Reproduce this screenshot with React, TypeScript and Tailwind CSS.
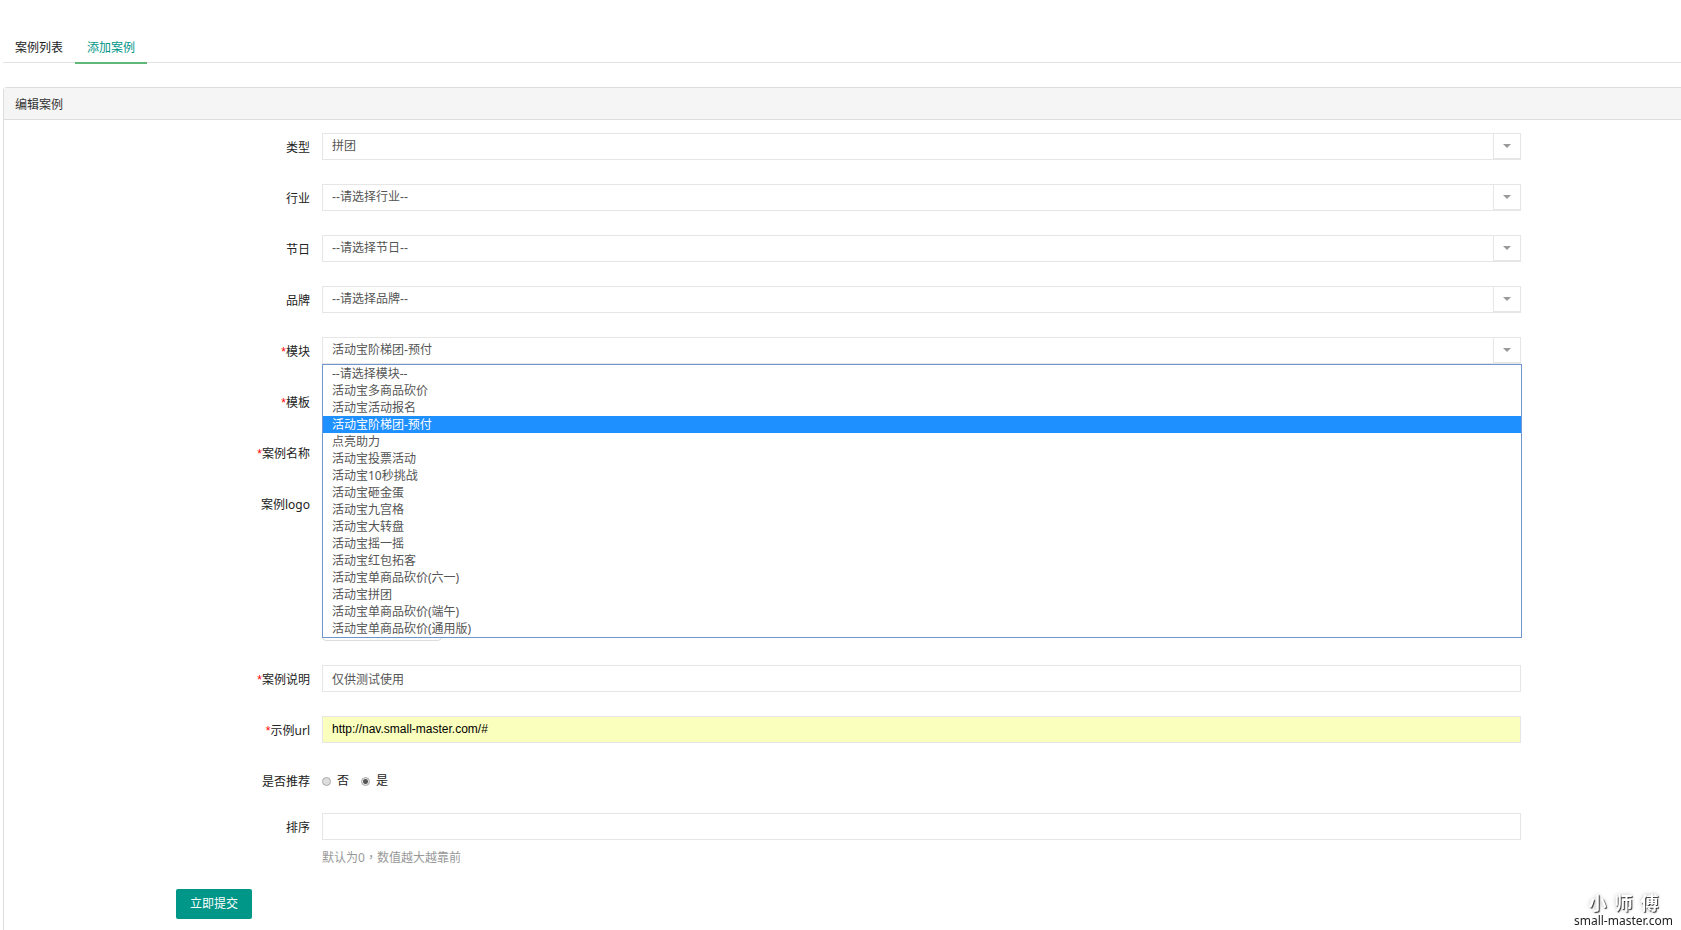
import { useState, type ReactNode } from "react";

const modules = [
  "--请选择模块--",
  "活动宝多商品砍价",
  "活动宝活动报名",
  "活动宝阶梯团-预付",
  "点亮助力",
  "活动宝投票活动",
  "活动宝10秒挑战",
  "活动宝砸金蛋",
  "活动宝九宫格",
  "活动宝大转盘",
  "活动宝摇一摇",
  "活动宝红包拓客",
  "活动宝单商品砍价(六一)",
  "活动宝拼团",
  "活动宝单商品砍价(端午)",
  "活动宝单商品砍价(通用版)",
];

const boxClass =
  "block h-[27px] w-full appearance-none rounded-none border border-[#e6e6e6] bg-white px-[9px] pb-px text-xs text-[#555] outline-none";
const arialClass = "font-['Liberation_Sans','Noto_Sans_CJK_SC',sans-serif]";

function Row({
  label,
  htmlFor,
  required,
  children,
}: {
  label: string;
  htmlFor: string;
  required?: boolean;
  children: ReactNode;
}) {
  return (
    <div className="flex gap-3">
      <label htmlFor={htmlFor} className="h-[22px] w-[306px] shrink-0 pt-[5px] text-right leading-5 text-[#222]">
        {required && <span className="font-['Liberation_Sans',sans-serif] text-[#ff0000]">*</span>}
        {label}
      </label>
      <div className="min-w-0 flex-1">{children}</div>
    </div>
  );
}

function SelectBox({
  id,
  options,
  value,
  onChange,
}: {
  id: string;
  options: string[];
  value?: string;
  onChange?: (value: string) => void;
}) {
  const [own, setOwn] = useState(options[0]);
  return (
    <div className="relative">
      <select
        id={id}
        value={value ?? own}
        onChange={(e) => (onChange ?? setOwn)(e.target.value)}
        className={`${boxClass} ${arialClass}`}
      >
        {options.map((o) => (
          <option key={o}>{o}</option>
        ))}
      </select>
      <span className="pointer-events-none absolute inset-y-0 right-0 flex w-7 items-center justify-center border-x border-t border-b-2 border-[#e6e6e6]">
        <svg width="8" height="4" viewBox="0 0 8 4" aria-hidden="true">
          <path d="M0 0h8L4 4z" fill="#999" />
        </svg>
      </span>
    </div>
  );
}

const radioClass =
  "size-[9px] appearance-none rounded-full border border-[#aaa] bg-[#dedede] checked:bg-[radial-gradient(circle,#555_0_2px,#e4e4e4_3px)]";

export default function App() {
  const [module, setModule] = useState(modules[3]);

  return (
    <div className="flex min-h-screen flex-col overflow-hidden bg-white pl-[3px] pt-8 font-['Noto_Sans','Noto_Sans_CJK_SC',sans-serif] text-xs text-[#333]">
      <nav className="flex h-[31px] border-b border-[#e2e2e2]">
        <a href="#list" className="h-8 px-3 leading-[31px] text-[#222]">
          案例列表
        </a>
        <a href="#add" className="h-8 border-b-2 border-[#5fb878] px-3 leading-[31px] text-[#009688]">
          添加案例
        </a>
      </nav>

      <section className="mt-6 flex flex-1 flex-col rounded-tl-sm border-l border-t border-[#ddd]">
        <h1 className="h-8 border-b border-[#ddd] bg-[#f5f5f5] pl-[11px] leading-[34px]">编辑案例</h1>

        <form onSubmit={(e) => e.preventDefault()} className="pt-[13px]">
          <div className="flex flex-col gap-6 pr-40">
            <Row label="类型" htmlFor="type">
              <SelectBox id="type" options={["拼团"]} />
            </Row>
            <Row label="行业" htmlFor="industry">
              <SelectBox id="industry" options={["--请选择行业--"]} />
            </Row>
            <Row label="节日" htmlFor="festival">
              <SelectBox id="festival" options={["--请选择节日--"]} />
            </Row>
            <Row label="品牌" htmlFor="brand">
              <SelectBox id="brand" options={["--请选择品牌--"]} />
            </Row>
            <Row label="模块" htmlFor="module" required>
              <div className="relative">
                <SelectBox id="module" options={modules} value={module} onChange={setModule} />
                <ul
                  role="listbox"
                  aria-label="模块"
                  className="absolute -right-px left-0 top-full z-10 border border-[#7096d2] bg-white"
                >
                  {modules.map((m) => (
                    <li
                      key={m}
                      role="option"
                      aria-selected={m === module}
                      onClick={() => setModule(m)}
                      className={`h-[17px] px-[9px] leading-[17px] ${
                        m === module ? "bg-[#1e90ff] text-white" : "text-[#555]"
                      }`}
                    >
                      {m}
                    </li>
                  ))}
                </ul>
              </div>
            </Row>
            <Row label="模板" htmlFor="template" required>
              <SelectBox id="template" options={[""]} />
            </Row>
            <Row label="案例名称" htmlFor="name" required>
              <input id="name" className={boxClass} />
            </Row>
            <Row label="案例logo" htmlFor="logo">
              <div className="h-[151px] w-[120px] rounded-sm border border-[#ddd]">
                <input id="logo" type="file" className="size-full opacity-0" />
              </div>
            </Row>
            <Row label="案例说明" htmlFor="remark" required>
              <input id="remark" defaultValue="仅供测试使用" className={`${boxClass} ${arialClass}`} />
            </Row>
            <Row label="示例url" htmlFor="url" required>
              <input
                id="url"
                defaultValue="http://nav.small-master.com/#"
                className="block h-[27px] w-full border border-[#e6e6e6] bg-[#faffbd] px-[9px] pb-0.5 font-['Liberation_Sans',sans-serif] text-xs text-black outline-none"
              />
            </Row>
            <Row label="是否推荐" htmlFor="recommend-yes">
              <div className="flex h-[22px] gap-3 pt-1 leading-5 text-[#222]">
                <label className="flex h-5 items-center gap-1.5">
                  <input type="radio" name="recommend" className={radioClass} />否
                </label>
                <label className="flex h-5 items-center gap-1.5">
                  <input id="recommend-yes" type="radio" name="recommend" defaultChecked className={radioClass} />是
                </label>
              </div>
            </Row>
            <Row label="排序" htmlFor="order">
              <input id="order" className={boxClass} />
              <p className="mt-[7px] leading-5 text-[#999]">
                默认为0<span className="font-['Noto_Sans_CJK_TC',sans-serif]">，</span>数值越大越靠前
              </p>
            </Row>
          </div>
          <button
            type="submit"
            className="ml-[172px] mt-[21px] block h-[30px] rounded-xs bg-[#009688] px-3.5 text-white"
          >
            立即提交
          </button>
        </form>
      </section>

      <div className="fixed bottom-0 right-2 flex flex-col items-center text-xs leading-[18px] text-[#222]">
        <div className="flex gap-2 text-lg font-bold leading-[18px] text-white [text-shadow:1px_1px_1px_#333,0_0_4px_#bbb]">
          <span>小</span>
          <span>师</span>
          <span>傅</span>
        </div>
        <span>small-master.com</span>
      </div>
    </div>
  );
}
